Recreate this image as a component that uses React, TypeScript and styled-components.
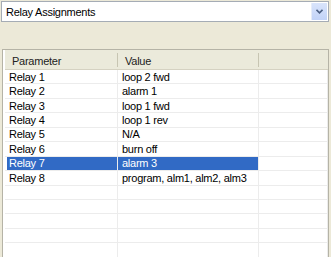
import React from 'react';
import styled, { createGlobalStyle } from 'styled-components';

const GlobalStyle = createGlobalStyle`
  html, body {
    margin: 0;
    padding: 0;
    background: #ece9d8;
    overflow: hidden;
  }
`;

const Page = styled.div`
  width: 331px;
  height: 257px;
  padding: 1px 2px 0 1px;
  box-sizing: border-box;
  display: flex;
  flex-direction: column;
  gap: 27px;
  overflow: hidden;
  font-family: "Liberation Sans", Arial, sans-serif;
  font-size: 11px;
  letter-spacing: -0.25px;
  color: #000;
`;

const Combo = styled.div`
  height: 21px;
  box-sizing: border-box;
  border: 1px solid #a5acb5;
  background: #fff;
  display: flex;
  align-items: stretch;
`;

const ComboText = styled.div`
  flex: 1;
  display: flex;
  align-items: center;
  padding-left: 4px;
`;

const DropButton = styled.div`
  width: 15px;
  margin: 1px;
  background: linear-gradient(#d9e4fb, #c2d3f8);
  border-left: 1px solid #e6ecf9;
  display: flex;
  align-items: center;
  justify-content: center;
`;

const Grid = styled.div`
  flex: 1;
  margin-left: 1px;
  border: 1px solid #b5b3a6;
  border-bottom: none;
  background: #fff;
  overflow: hidden;
  padding-left: 2px;
`;

const HeaderRow = styled.div`
  display: grid;
  grid-template-columns: 113px 141px 1fr;
  height: 19px;
  background: #ebeadb;
  border-bottom: 1px solid #d5d2c2;
`;

const HeaderCell = styled.div<{ $last?: boolean }>`
  display: flex;
  align-items: center;
  padding: 2px 0 0 7px;
  border-right: ${p => (p.$last ? 'none' : '1px solid #c7c5b2')};
  margin: 3px 0 3px;
  color: #222;
`;

const Row = styled.div`
  display: grid;
  grid-template-columns: 113px 141px 1fr;
  height: 14.45px;
  box-sizing: border-box;
  border-bottom: 1px solid #ececec;
`;

const Cell = styled.div<{ $sel?: boolean; $first?: boolean }>`
  display: flex;
  align-items: center;
  padding-left: ${p => (p.$first ? '2px' : '4px')};
  margin-left: ${p => (p.$first ? '2px' : '0')};
  border-right: 1px solid #ececec;
  background: ${p => (p.$sel ? '#316ac5' : 'transparent')};
  color: ${p => (p.$sel ? '#fff' : '#000')};
  white-space: nowrap;
`;

const rows: [string, string][] = [
  ['Relay 1', 'loop 2 fwd'],
  ['Relay 2', 'alarm 1'],
  ['Relay 3', 'loop 1 fwd'],
  ['Relay 4', 'loop 1 rev'],
  ['Relay 5', 'N/A'],
  ['Relay 6', 'burn off'],
  ['Relay 7', 'alarm 3'],
  ['Relay 8', 'program, alm1, alm2, alm3'],
  ['', ''],
  ['', ''],
  ['', ''],
  ['', ''],
  ['', ''],
  ['', ''],
];

const SELECTED = 6;

export default function App() {
  return (
    <Page>
      <GlobalStyle />
      <Combo>
        <ComboText>Relay Assignments</ComboText>
        <DropButton>
          <svg width="7" height="5" viewBox="0 0 7 5">
            <path d="M0.5 0.8 L3.5 3.8 L6.5 0.8" fill="none" stroke="#4d6185" strokeWidth="1.6" />
          </svg>
        </DropButton>
      </Combo>
      <Grid>
        <HeaderRow>
          <HeaderCell>Parameter</HeaderCell>
          <HeaderCell>Value</HeaderCell>
          <HeaderCell $last />
        </HeaderRow>
        {rows.map(([param, value], i) => (
          <Row key={i}>
            <Cell $first $sel={i === SELECTED}>{param}</Cell>
            <Cell $sel={i === SELECTED}>{value}</Cell>
            <Cell />
          </Row>
        ))}
      </Grid>
    </Page>
  );
}
